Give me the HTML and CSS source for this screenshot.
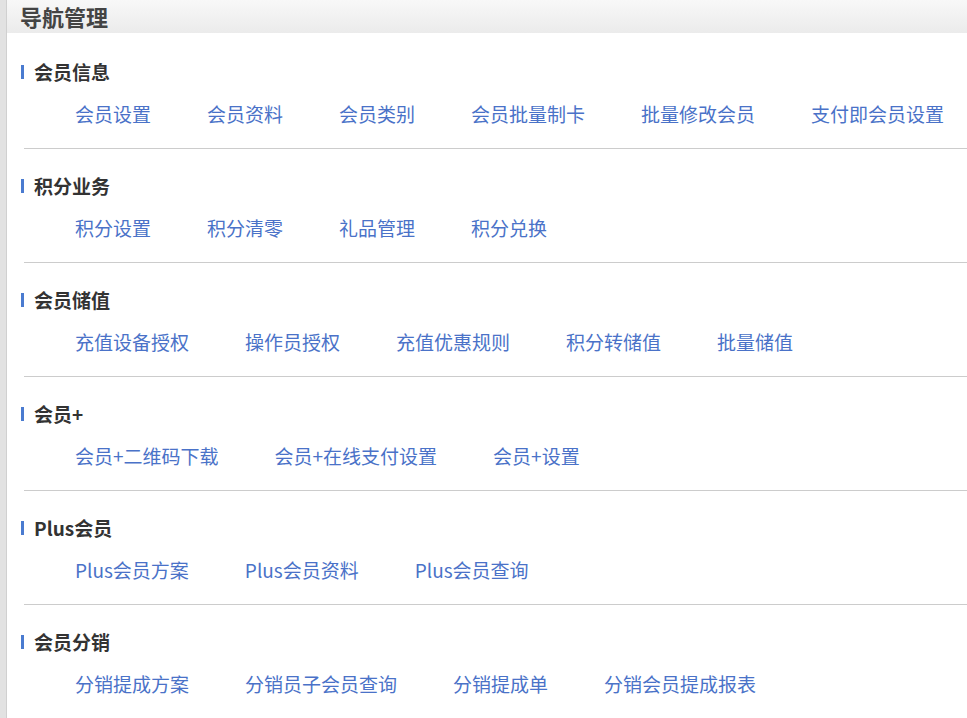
FILE: index.html
```html
<!DOCTYPE html>
<html lang="zh-CN">

<head>
    <meta charset="UTF-8">
    <meta name="viewport" content="width=device-width, initial-scale=1.0">
    <title>导航管理</title>
    <link rel="stylesheet" href="styles.css">
</head>

<body>
    <div class="side"></div>
    <div class="main">
        <div class="top">导航管理</div>
        <div class="content">
            <div class="group">
                <h2 class="group-title">会员信息</h2>
                <ul class="links">
                    <li><a href="#">会员设置</a></li>
                    <li><a href="#">会员资料</a></li>
                    <li><a href="#">会员类别</a></li>
                    <li><a href="#">会员批量制卡</a></li>
                    <li><a href="#">批量修改会员</a></li>
                    <li><a href="#">支付即会员设置</a></li>
                </ul>
            </div>
            <div class="group">
                <h2 class="group-title">积分业务</h2>
                <ul class="links">
                    <li><a href="#">积分设置</a></li>
                    <li><a href="#">积分清零</a></li>
                    <li><a href="#">礼品管理</a></li>
                    <li><a href="#">积分兑换</a></li>
                </ul>
            </div>
            <div class="group">
                <h2 class="group-title">会员储值</h2>
                <ul class="links">
                    <li><a href="#">充值设备授权</a></li>
                    <li><a href="#">操作员授权</a></li>
                    <li><a href="#">充值优惠规则</a></li>
                    <li><a href="#">积分转储值</a></li>
                    <li><a href="#">批量储值</a></li>
                </ul>
            </div>
            <div class="group">
                <h2 class="group-title">会员+</h2>
                <ul class="links">
                    <li><a href="#">会员+二维码下载</a></li>
                    <li><a href="#">会员+在线支付设置</a></li>
                    <li><a href="#">会员+设置</a></li>
                </ul>
            </div>
            <div class="group">
                <h2 class="group-title">Plus会员</h2>
                <ul class="links">
                    <li><a href="#">Plus会员方案</a></li>
                    <li><a href="#">Plus会员资料</a></li>
                    <li><a href="#">Plus会员查询</a></li>
                </ul>
            </div>
            <div class="group">
                <h2 class="group-title">会员分销</h2>
                <ul class="links">
                    <li><a href="#">分销提成方案</a></li>
                    <li><a href="#">分销员子会员查询</a></li>
                    <li><a href="#">分销提成单</a></li>
                    <li><a href="#">分销会员提成报表</a></li>
                </ul>
            </div>
        </div>
    </div>
</body>

</html>
```

FILE: styles.css
```css
body,
ul,
li,
h2 {
    margin: 0;
    padding: 0;
    list-style: none;
}

body {
    display: flex;
    min-height: 100vh;
    font-family: "Noto Sans CJK SC", "Noto Sans", sans-serif;
    background: #fff;
    color: #333;
    overflow: hidden;
}

.side {
    width: 6px;
    flex-shrink: 0;
    background: #e2e2e2;
    border-right: 1px solid #d0d0d0;
}

.main {
    flex: 1;
    min-width: 0;
}

.top {
    height: 33px;
    line-height: 33px;
    padding-left: 13px;
    font-size: 22px;
    font-weight: bold;
    color: #444;
    background: linear-gradient(#f8f8f8, #ebebeb);
}

.content {
    padding-top: 2px;
}

.group {
    margin-left: 17px;
    padding: 25px 0 22px;
    border-bottom: 1px solid #cccccc;
}

.group-title {
    margin-left: -3px;
    font-size: 19px;
    line-height: 24px;
    font-weight: bold;
    color: #333;
    display: flex;
    align-items: center;
}

.group-title::before {
    content: "";
    flex-shrink: 0;
    width: 3px;
    height: 14px;
    background: #4a7bd0;
    margin-right: 10px;
}

.links {
    display: flex;
    margin-top: 18px;
    padding-left: 51px;
}

.links li {
    flex-shrink: 0;
    white-space: nowrap;
    margin-right: 56px;
    font-size: 19px;
    line-height: 24px;
}

.links a {
    color: #4a72c8;
    text-decoration: none;
}
```
